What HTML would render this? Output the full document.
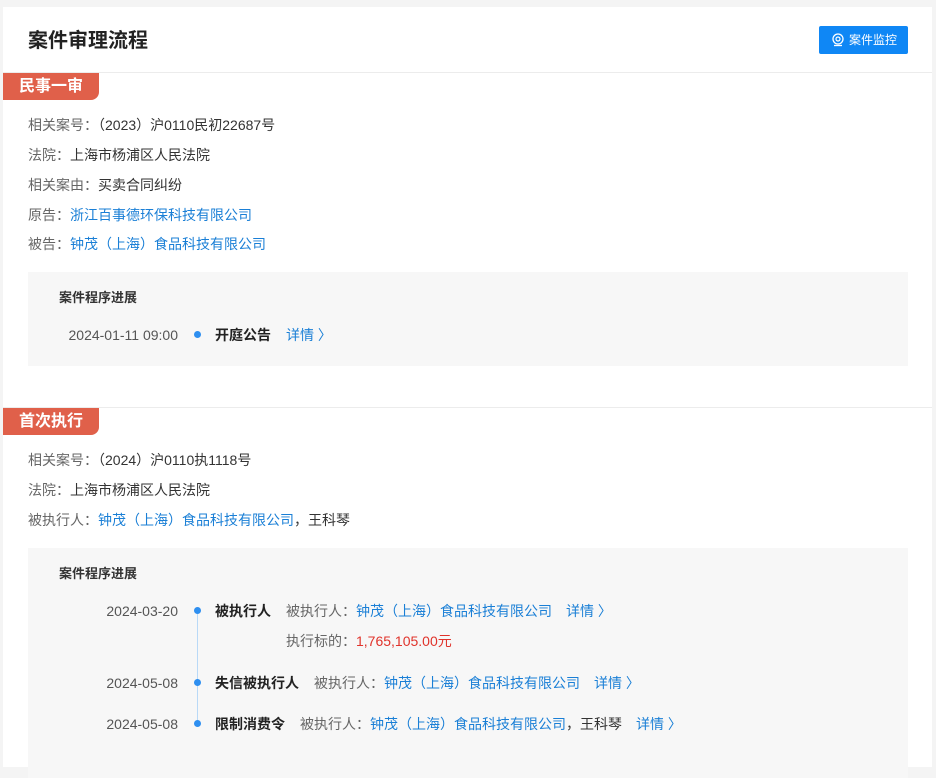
<!DOCTYPE html>
<html><head><meta charset="utf-8"><style>
*{margin:0;padding:0;box-sizing:border-box}
body{width:936px;height:751px;overflow:hidden;background:#f4f4f4;font-family:"Liberation Sans","Noto Sans CJK SC",sans-serif;font-size:14px;color:#333}
.card{position:absolute;left:3px;top:7px;width:929px;height:760px;background:#fff}
.a{position:absolute;white-space:nowrap;line-height:18px}
.g{color:#666}.b{color:#1a7fd6}.r{color:#e0332b}
.tag{position:absolute;left:0;width:96px;height:27px;background:#e0604a;color:#fff;font-size:16px;font-weight:bold;line-height:27px;padding-left:16px;border-radius:0 0 8px 0}
.box{position:absolute;left:25px;width:880px;background:#f7f7f7}
.dot{position:absolute;width:7px;height:7px;border-radius:50%;background:#2e8ff0}
.d{color:#555;text-align:right;width:120px}
.bold{font-weight:bold;color:#222}
</style></head><body>
<div class="card">
<div class="a" style="left:25px;top:25px;font-size:20px;font-weight:bold;color:#222">案件审理流程</div>
<div class="a" style="left:816px;top:19px;width:89px;height:28px;background:#0f87f5;border-radius:2px;color:#fff;font-size:12px;line-height:28px;padding-left:30px">案件监控
<svg style="position:absolute;left:13px;top:7px" width="12" height="14" viewBox="0 0 12 14"><circle cx="6" cy="6" r="5" fill="none" stroke="#fff" stroke-width="1.3"/><circle cx="6" cy="6" r="2" fill="none" stroke="#fff" stroke-width="1.2"/><path d="M2 12.5h8" stroke="#fff" stroke-width="1.3"/></svg></div>
<div class="a" style="left:0;top:65px;width:929px;border-top:1px solid #ececec"></div>
<div class="tag" style="top:66px">民事一审</div>
<div class="a" style="left:25px;top:109px"><span class="g">相关案号：</span>（2023）沪0110民初22687号</div>
<div class="a" style="left:25px;top:139px"><span class="g">法院：</span>上海市杨浦区人民法院</div>
<div class="a" style="left:25px;top:169px"><span class="g">相关案由：</span>买卖合同纠纷</div>
<div class="a" style="left:25px;top:199px"><span class="g">原告：</span><span class="b">浙江百事德环保科技有限公司</span></div>
<div class="a" style="left:25px;top:228px"><span class="g">被告：</span><span class="b">钟茂（上海）食品科技有限公司</span></div>
<div class="box" style="top:265px;height:94px">
<div class="a bold" style="left:31px;top:17px;font-size:13px;color:#333">案件程序进展</div>
<div class="a d" style="left:30px;top:54px;width:120px">2024-01-11 09:00</div>
<div class="dot" style="left:166px;top:59px"></div>
<div class="a bold" style="left:187px;top:54px">开庭公告</div>
<div class="a b" style="left:258px;top:54px">详情 〉</div>
</div>
<div class="a" style="left:0;top:400px;width:929px;border-top:1px solid #ececec"></div>
<div class="tag" style="top:401px">首次执行</div>
<div class="a" style="left:25px;top:444px"><span class="g">相关案号：</span>（2024）沪0110执1118号</div>
<div class="a" style="left:25px;top:474px"><span class="g">法院：</span>上海市杨浦区人民法院</div>
<div class="a" style="left:25px;top:504px"><span class="g">被执行人：</span><span class="b">钟茂（上海）食品科技有限公司</span>，王科琴</div>
<div class="box" style="top:541px;height:230px">
<div class="a bold" style="left:31px;top:17px;font-size:13px;color:#333">案件程序进展</div>
<div class="a" style="left:169px;top:66px;height:110px;border-left:1px solid #b9d9f7"></div>
<div class="a d" style="left:30px;top:54px">2024-03-20</div>
<div class="dot" style="left:166px;top:59px"></div>
<div class="a bold" style="left:187px;top:54px">被执行人</div>
<div class="a" style="left:258px;top:54px"><span class="g">被执行人：</span><span class="b">钟茂（上海）食品科技有限公司</span>　<span class="b">详情 〉</span></div>
<div class="a" style="left:258px;top:84px"><span class="g">执行标的：</span><span class="r">1,765,105.00元</span></div>
<div class="a d" style="left:30px;top:126px">2024-05-08</div>
<div class="dot" style="left:166px;top:131px"></div>
<div class="a bold" style="left:187px;top:126px">失信被执行人</div>
<div class="a" style="left:286px;top:126px"><span class="g">被执行人：</span><span class="b">钟茂（上海）食品科技有限公司</span>　<span class="b">详情 〉</span></div>
<div class="a d" style="left:30px;top:167px">2024-05-08</div>
<div class="dot" style="left:166px;top:172px"></div>
<div class="a bold" style="left:187px;top:167px">限制消费令</div>
<div class="a" style="left:272px;top:167px"><span class="g">被执行人：</span><span class="b">钟茂（上海）食品科技有限公司</span>，王科琴　<span class="b">详情 〉</span></div>
</div>
</div>
</body></html>
